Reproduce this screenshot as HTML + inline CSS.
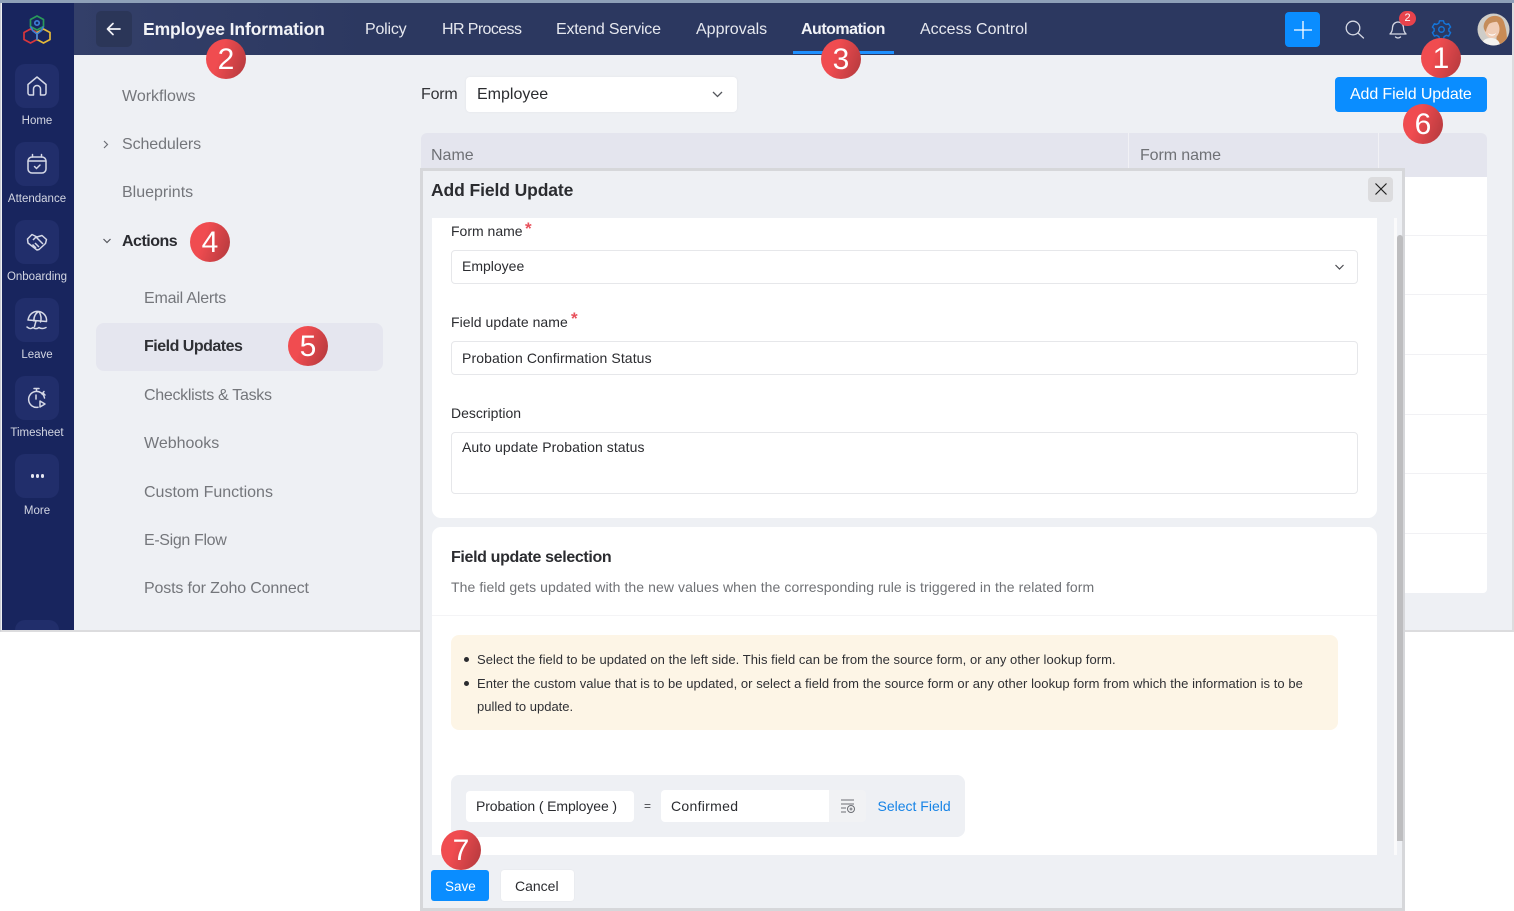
<!DOCTYPE html>
<html><head><meta charset="utf-8"><style>
html,body{margin:0;padding:0;background:#fff}
body{width:1514px;height:911px;position:relative;overflow:hidden;font-family:"Liberation Sans",sans-serif}
div,span.t{position:absolute;box-sizing:border-box}
.t{white-space:nowrap;line-height:20px;height:20px;position:absolute}
.nav{color:#e6e8ef;font-size:16px;top:20px}
.side{color:#74767b;font-size:16px}
.lb{color:#d3d6e2;font-size:11.5px;width:72px;left:1px;text-align:center}
.ic{left:15px;width:44px;height:44px;border-radius:10px;background:#212e6b}
.in{background:#fff;border:1px solid #e6e7ea;border-radius:4px}
.f{color:#2b2c30;font-size:14px}
.red{color:#e8505b;font-size:17px;line-height:14px;height:14px;font-weight:700}
.n{width:40px;height:40px;border-radius:50%;background:linear-gradient(110deg,#f04c50 35%,#b63a3e 95%);color:#fff;text-align:center;font:30px/42px "Liberation Sans",sans-serif}
svg{position:absolute;overflow:visible}
</style></head><body>
<!-- app frame -->
<div style="left:0;top:0;width:1514px;height:632px;background:#eef0f4;border-bottom:2px solid #dcdcde;border-right:2px solid #dcdcde;border-left:1px solid #c9ccd4"></div>
<div style="left:0;top:0;width:1514px;height:3px;background:#8ea0b8"></div>
<!-- sidebar -->
<div style="left:2px;top:3px;width:72px;height:627px;background:#18255e"></div>
<svg style="left:20px;top:15px" width="34" height="30" viewBox="0 0 34 30" fill="none" stroke-width="1.700" stroke-linejoin="round">
<path d="M17 1l6.500 3.500v7L17 15l-6.500-3.500v-7z" stroke="#2a9a5a"/><path d="M10.500 14l6.500 3.500v7L10.500 28 4 24.500v-7z" stroke="#d8363c"/><path d="M23.500 14l6.500 3.500v7L23.500 28 17 24.500v-7z" stroke="#e4b93a"/><path d="M10.500 11.500L13 16l4 3 4-3 2.500-4.500M17 19v6" stroke="#3d7fd6"/><circle cx="17" cy="8" r="2.200" stroke="#3d7fd6"/></svg>
<div class="ic" style="top:64px"></div>
<svg style="left:26px;top:75px" width="22" height="22" viewBox="0 0 22 22" fill="none" stroke="#d5d8e6" stroke-width="1.500" stroke-linejoin="round"><path d="M2 9.500L11 2l9 7.500V18a2 2 0 0 1-2 2h-3.500v-6a3.500 3.500 0 0 0-7 0v6H4a2 2 0 0 1-2-2z"/></svg>
<span class="t lb" style="top:111px">Home</span>
<div class="ic" style="top:142px"></div>
<svg style="left:26px;top:153px" width="22" height="22" viewBox="0 0 22 22" fill="none" stroke="#d5d8e6" stroke-width="1.500" stroke-linecap="round"><rect x="2" y="4" width="18" height="16" rx="4"/><path d="M6.500 1.500V4M15.500 1.500V4M2 8h18M8.500 13.500l2 2 3.500-3.500"/></svg>
<span class="t lb" style="top:189px">Attendance</span>
<div class="ic" style="top:220px"></div>
<svg style="left:26px;top:231px" width="22" height="22" viewBox="0 0 22 22" fill="none" stroke="#d5d8e6" stroke-width="1.500" stroke-linejoin="round"><path d="M1.500 8L6 3.500l5 2.500 5-1.500 4.500 4-1 4-6.500 6-2 .5L2 12z"/><path d="M7 9l3-3 7 7M9 12l4 4M6.500 13.500l3.500 3.500"/></svg>
<span class="t lb" style="top:267px">Onboarding</span>
<div class="ic" style="top:298px"></div>
<svg style="left:26px;top:309px" width="22" height="22" viewBox="0 0 22 22" fill="none" stroke="#d5d8e6" stroke-width="1.500" stroke-linecap="round" stroke-linejoin="round"><path d="M2 11C3 5 8 1.500 13 2.500s8 5 7.500 10zM8 12c-.5-4 1.500-8 5-9.500M14.500 13c1-3 .5-7-1.500-10.500M10 12l-1.500 5.500"/><path d="M1 18c2.500 2 4 2 6 .5 2 1.500 4 1.500 6 0 2 1.500 4 1.500 7 0"/></svg>
<span class="t lb" style="top:345px">Leave</span>
<div class="ic" style="top:376px"></div>
<svg style="left:26px;top:387px" width="22" height="22" viewBox="0 0 22 22" fill="none" stroke="#d5d8e6" stroke-width="1.500" stroke-linecap="round" stroke-linejoin="round"><path d="M8 1.500h5M10.500 4v-2M17 6l2 2M18 4.500L16 7"/><path d="M12 20.300A8 8 0 1 1 18.500 11"/><path d="M10 8v4M14 14l5 3-5 3z"/></svg>
<span class="t lb" style="top:423px">Timesheet</span>
<div class="ic" style="top:454px"></div>
<div style="left:30.500px;top:474px;width:3.500px;height:3.500px;border-radius:50%;background:#e3e5ef;box-shadow:5px 0 #e3e5ef,10px 0 #e3e5ef"></div>
<span class="t lb" style="top:501px">More</span>
<div style="left:15px;top:620px;width:44px;height:10px;border-radius:10px 10px 0 0;background:#212e6b"></div>
<!-- header -->
<div style="left:74px;top:3px;width:1438px;height:52px;background:linear-gradient(90deg,#333f69,#2c3860 300px)"></div>
<div style="left:96px;top:11px;width:36px;height:36px;border-radius:5px;background:#2b3658"></div>
<svg style="left:106px;top:22px" width="15" height="14" viewBox="0 0 15 14" fill="none" stroke="#f2f3f7" stroke-width="1.700" stroke-linecap="round" stroke-linejoin="round"><path d="M14 7H1.500M7 1.500L1.500 7 7 12.500"/></svg>
<span class="t" style="left:143px;top:19px;color:#f2f3f7;font-size:17.500px;font-weight:700;letter-spacing:-.1px">Employee Information</span>
<span class="t nav" style="left:365px;letter-spacing:-.2px">Policy</span>
<span class="t nav" style="left:442px;letter-spacing:-.6px">HR Process</span>
<span class="t nav" style="left:556px;letter-spacing:-.2px">Extend Service</span>
<span class="t nav" style="left:696px">Approvals</span>
<span class="t nav" style="left:801px;font-weight:700;color:#f2f3f7;letter-spacing:-.5px">Automation</span>
<div style="left:793px;top:51px;width:101px;height:3px;background:#1e90ff"></div>
<span class="t nav" style="left:920px">Access Control</span>
<div style="left:1285px;top:12px;width:35px;height:35px;border-radius:4px;background:#0a8dff"></div>
<svg style="left:1294px;top:21px" width="18" height="18" viewBox="0 0 18 18" stroke="#fff" stroke-width="1.300"><path d="M9 0v18M0 9h18"/></svg>
<svg style="left:1345px;top:20px" width="20" height="19" viewBox="0 0 20 19" fill="none" stroke="#d5d8e4" stroke-width="1.300" stroke-linecap="round"><circle cx="8" cy="8" r="6.800"/><path d="M13 13l5.500 5"/></svg>
<svg style="left:1389px;top:19px" width="19" height="20" viewBox="0 0 19 20" fill="none" stroke="#d5d8e4" stroke-width="1.300" stroke-linejoin="round" stroke-linecap="round"><path d="M1 15c1.500-1.500 2.500-3 2.500-6.500a5.500 5.500 0 0 1 11 0c0 3.500 1 5 2.500 6.500zM6.500 18c1.500 1.200 3.500 1.200 5 0"/></svg>
<div style="left:1399px;top:11px;width:17px;height:15px;border-radius:8px;background:#e8434c;color:#fff;font-size:11px;line-height:15px;text-align:center">2</div>
<svg style="left:1432px;top:20px" width="19" height="19" viewBox="0 0 24 24" fill="none" stroke="#1474d8" stroke-width="1.800" stroke-linejoin="round"><path d="M9.500 2h5l.8 3 2.700 1.600 3-.9 2.500 4.300-2.200 2 0 3-.0 0 2.200 2-2.500 4.300-3-.9-2.700 1.600-.8 3h-5l-.8-3-2.700-1.600-3 .9L.5 17l2.200-2v-3l-2.200-2L3 5.700l3 .9 2.700-1.600z" transform="translate(0 -1)"/><circle cx="12" cy="12" r="3.500"/></svg>
<svg style="left:1477px;top:13px" width="33" height="33" viewBox="0 0 33 33"><defs><clipPath id="c"><circle cx="16.500" cy="16.500" r="16"/></clipPath></defs><g clip-path="url(#c)"><rect width="33" height="33" fill="#cfcdc8"/><path d="M7 11C10 1 24 0 27 9c2 7 4 14 2 24H19l1-15-8-8z" fill="#c98b55"/><ellipse cx="15" cy="16" rx="7.500" ry="9.500" fill="#f0cdb6"/><path d="M7 11c3-6 12-7 16-3-3 1-9 1-11 3-2 3-3 6-3 8-2-2-3-5-2-8z" fill="#c48d5b"/><path d="M4 33c1-6 5-8 10-8s9 3 9 8z" fill="#f4f2ef"/><path d="M11 20c2 2 6 2 8 0-1 3.500-7 3.500-8 0z" fill="#fff"/></g></svg>
<!-- left menu -->
<span class="t side" style="left:122px;top:87px">Workflows</span>
<svg style="left:103px;top:140px" width="7" height="9" fill="none" stroke="#6d6f75" stroke-width="1.200"><path d="M1 1l3.500 3.500L1 8"/></svg>
<span class="t side" style="left:122px;top:135px;letter-spacing:-.1px">Schedulers</span>
<span class="t side" style="left:122px;top:183px">Blueprints</span>
<svg style="left:103px;top:238px" width="9" height="7" fill="none" stroke="#55575d" stroke-width="1.200"><path d="M.5 1l3.500 3.500L7.500 1"/></svg>
<span class="t" style="left:122px;top:232px;font-size:16px;font-weight:700;color:#2a2b30;letter-spacing:-.5px">Actions</span>
<span class="t side" style="left:144px;top:289px;letter-spacing:-.2px">Email Alerts</span>
<div style="left:96px;top:323px;width:287px;height:48px;border-radius:8px;background:#e5e6ef"></div>
<span class="t" style="left:144px;top:337px;font-size:16px;font-weight:700;color:#2f3035;letter-spacing:-.5px">Field Updates</span>
<span class="t side" style="left:144px;top:386px;letter-spacing:-.3px">Checklists &amp; Tasks</span>
<span class="t side" style="left:144px;top:434px">Webhooks</span>
<span class="t side" style="left:144px;top:483px">Custom Functions</span>
<span class="t side" style="left:144px;top:531px;letter-spacing:-.35px">E-Sign Flow</span>
<span class="t side" style="left:144px;top:579px;letter-spacing:-.15px">Posts for Zoho Connect</span>
<!-- content -->
<span class="t" style="left:421px;top:85px;font-size:16px;color:#333438;letter-spacing:-.2px">Form</span>
<div style="left:466px;top:77px;width:271px;height:35px;border-radius:4px;background:#fff;box-shadow:0 0 2px #e2e3e8"></div>
<span class="t" style="left:477px;top:85px;font-size:16px;color:#2b2c30">Employee</span>
<svg style="left:712px;top:91px" width="11" height="7" fill="none" stroke="#55575d" stroke-width="1.300"><path d="M1 1l4.500 4.500L10 1"/></svg>
<div style="left:1335px;top:77px;width:152px;height:35px;border-radius:4px;background:#0a8dff"></div>
<span class="t" style="left:1350px;top:85px;font-size:16px;color:#fff;letter-spacing:-.12px">Add Field Update</span>
<div style="left:421px;top:133px;width:1066px;height:44px;background:#e4e5ee;border-radius:6px 6px 0 0"></div>
<div style="left:1128px;top:133px;width:1px;height:44px;background:#f1f1f5"></div>
<div style="left:1378px;top:133px;width:1px;height:44px;background:#f1f1f5"></div>
<span class="t" style="left:431px;top:146px;font-size:16px;color:#6f7176">Name</span>
<span class="t" style="left:1140px;top:146px;font-size:16px;color:#6f7176;letter-spacing:-.1px">Form name</span>
<div style="left:1400px;top:177px;width:87px;height:416px;background:#fff;border-radius:0 0 4px 0"></div>
<div style="left:1400px;top:235px;width:87px;height:1px;background:#f1f1f4"></div>
<div style="left:1400px;top:294px;width:87px;height:1px;background:#f1f1f4"></div>
<div style="left:1400px;top:354px;width:87px;height:1px;background:#f1f1f4"></div>
<div style="left:1400px;top:414px;width:87px;height:1px;background:#f1f1f4"></div>
<div style="left:1400px;top:473px;width:87px;height:1px;background:#f1f1f4"></div>
<div style="left:1400px;top:533px;width:87px;height:1px;background:#f1f1f4"></div>
<!-- modal -->
<div style="left:420px;top:168px;width:985px;height:743px;background:#eef0f4;border:3px solid #d6d7da"></div>
<span class="t" style="left:431px;top:180px;font-size:17.500px;font-weight:700;color:#2b2c30;letter-spacing:-.1px">Add Field Update</span>
<div style="left:1368px;top:177px;width:25px;height:25px;border-radius:4px;background:#dcdcde"></div>
<svg style="left:1375px;top:183px" width="12" height="12" stroke="#222" stroke-width="1.200"><path d="M.5.5l11 11M11.500.5l-11 11"/></svg>
<div style="left:1394px;top:218px;width:3px;height:637px;background:#fafafb"></div>
<div style="left:1397px;top:235px;width:5.500px;height:606px;background:#bdbdbf;border-radius:3px 3px 0 0"></div>
<!-- card 1 -->
<div style="left:432px;top:218px;width:945px;height:300px;background:#fff;border-radius:0 0 9px 9px"></div>
<span class="t f" style="left:451px;top:221px">Form name</span><span class="t red" style="left:525px;top:222px">*</span>
<div class="in" style="left:451px;top:250px;width:907px;height:34px"></div>
<span class="t f" style="left:462px;top:256px">Employee</span>
<svg style="left:1335px;top:264px" width="9" height="7" fill="none" stroke="#4a4b50" stroke-width="1.200"><path d="M.5 1l4 4 4-4"/></svg>
<span class="t f" style="left:451px;top:312px;letter-spacing:.05px">Field update name</span><span class="t red" style="left:571px;top:312px">*</span>
<div class="in" style="left:451px;top:341px;width:907px;height:34px"></div>
<span class="t f" style="left:462px;top:348px;letter-spacing:.1px">Probation Confirmation Status</span>
<span class="t f" style="left:451px;top:403px">Description</span>
<div class="in" style="left:451px;top:432px;width:907px;height:62px"></div>
<span class="t f" style="left:462px;top:437px;letter-spacing:.07px">Auto update Probation status</span>
<!-- card 2 -->
<div style="left:432px;top:527px;width:945px;height:328px;background:#fff;border-radius:9px 9px 0 0"></div>
<span class="t" style="left:451px;top:548px;font-size:16px;font-weight:700;color:#2b2c30;letter-spacing:-.35px">Field update selection</span>
<span class="t" style="left:451px;top:577px;font-size:14px;color:#707276;letter-spacing:.08px">The field gets updated with the new values when the corresponding rule is triggered in the related form</span>
<div style="left:432px;top:615px;width:945px;height:1px;background:#f4f4f6"></div>
<div style="left:451px;top:635px;width:887px;height:95px;border-radius:8px;background:#fdf5e6"></div>
<div style="left:464px;top:657px;width:5px;height:5px;border-radius:50%;background:#2b2c30"></div>
<div style="left:464px;top:681px;width:5px;height:5px;border-radius:50%;background:#2b2c30"></div>
<span class="t" style="left:477px;top:650px;font-size:13px;color:#2f3034;letter-spacing:.045px">Select the field to be updated on the left side. This field can be from the source form, or any other lookup form.</span>
<span class="t" style="left:477px;top:674px;font-size:13px;color:#2f3034;letter-spacing:.05px">Enter the custom value that is to be updated, or select a field from the source form or any other lookup form from which the information is to be</span>
<span class="t" style="left:477px;top:697px;font-size:13px;color:#2f3034">pulled to update.</span>
<div style="left:451px;top:775px;width:514px;height:62px;border-radius:8px;background:#eef0f4"></div>
<div style="left:466px;top:791px;width:168px;height:31px;border-radius:4px;background:#fff"></div>
<span class="t f" style="left:476px;top:796px;letter-spacing:-.1px">Probation ( Employee )</span>
<span class="t" style="left:644px;top:796px;font-size:12px;color:#44454a">=</span>
<div style="left:661px;top:790px;width:168px;height:32px;border-radius:4px 0 0 4px;background:#fff"></div>
<div style="left:829px;top:790px;width:37px;height:32px;border-radius:0 4px 4px 0;background:#f1f2f4"></div>
<span class="t f" style="left:671px;top:796px;letter-spacing:.3px">Confirmed</span>
<svg style="left:840px;top:799px" width="16" height="15" fill="none" stroke="#6d6f75" stroke-width="1"><path d="M1 1h13M1 5h13M1 9h5M1 13h5"/><circle cx="11" cy="10" r="3.500"/><path d="M11 8.500v3M9.500 10h3"/></svg>
<span class="t" style="left:877.500px;top:796px;font-size:14px;color:#1683e6">Select Field</span>
<!-- footer -->
<div style="left:431px;top:870px;width:58px;height:31px;border-radius:3px;background:#0a8dff"></div>
<span class="t" style="left:445px;top:877px;font-size:13.500px;color:#fff">Save</span>
<div style="left:501px;top:870px;width:73px;height:31px;border-radius:3px;background:#fff;box-shadow:0 0 1px #d8d9dd"></div>
<span class="t" style="left:515px;top:876px;font-size:14px;color:#2b2c30">Cancel</span>
<!-- badges -->
<div class="n" style="left:1421px;top:38px">1</div>
<div class="n" style="left:206px;top:39px">2</div>
<div class="n" style="left:821px;top:39px">3</div>
<div class="n" style="left:190px;top:222px">4</div>
<div class="n" style="left:288px;top:326px">5</div>
<div class="n" style="left:1403px;top:104px">6</div>
<div class="n" style="left:441px;top:830px">7</div>
</body></html>
